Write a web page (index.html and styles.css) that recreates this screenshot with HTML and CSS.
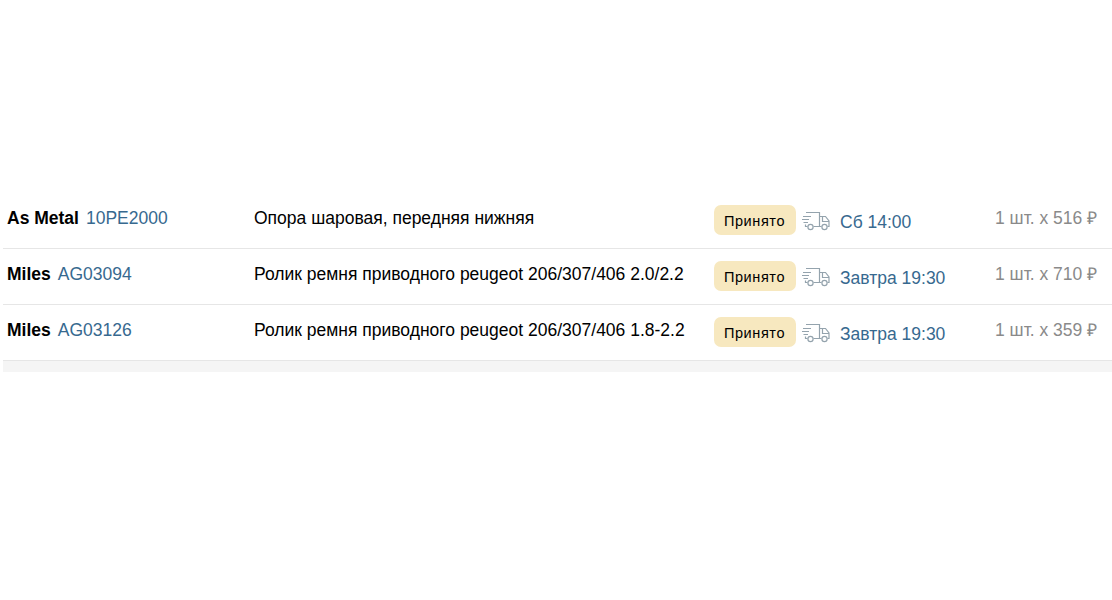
FILE: index.html
```html
<!DOCTYPE html>
<html lang="ru">
<head>
<meta charset="utf-8">
<title>Заказы</title>
<link rel="stylesheet" href="styles.css">
</head>
<body>
<svg class="defs" width="0" height="0" aria-hidden="true">
  <symbol id="truck" viewBox="0 0 28 20">
    <path d="M4 1.500H17.500V15.500H11.500M5.500 15.500H3.500V13.500M17.500 5.500H23.500L27 10V15.500H25.500M19.500 15.500H17.500M20.500 5.500V10.500H27M1 5.500H9M0 8.500H7M1.500 11.500H6" fill="none" stroke="currentColor" stroke-width="1.200"/>
    <circle cx="8.500" cy="16" r="2.600" fill="none" stroke="currentColor" stroke-width="1.200"/>
    <circle cx="22.500" cy="16" r="2.600" fill="none" stroke="currentColor" stroke-width="1.200"/>
  </symbol>
</svg>
<main class="list">
  <div class="row">
    <div class="part"><b class="brand">As Metal</b><a class="code">10PE2000</a></div>
    <div class="name">Опора шаровая, передняя нижняя</div>
    <div class="delivery">
      <span class="badge">Принято</span>
      <svg class="truck"><use href="#truck"/></svg>
      <a class="date">Сб 14:00</a>
    </div>
    <div class="qty">1 шт. х 516 ₽</div>
  </div>
  <div class="row">
    <div class="part"><b class="brand">Miles</b><a class="code">AG03094</a></div>
    <div class="name">Ролик ремня приводного peugeot 206/307/406 2.0/2.2</div>
    <div class="delivery">
      <span class="badge">Принято</span>
      <svg class="truck"><use href="#truck"/></svg>
      <a class="date">Завтра 19:30</a>
    </div>
    <div class="qty">1 шт. х 710 ₽</div>
  </div>
  <div class="row">
    <div class="part"><b class="brand">Miles</b><a class="code">AG03126</a></div>
    <div class="name">Ролик ремня приводного peugeot 206/307/406 1.8-2.2</div>
    <div class="delivery">
      <span class="badge">Принято</span>
      <svg class="truck"><use href="#truck"/></svg>
      <a class="date">Завтра 19:30</a>
    </div>
    <div class="qty">1 шт. х 359 ₽</div>
  </div>
  <div class="footer"></div>
</main>
</body>
</html>
```
FILE: styles.css
```css
html, body {
  margin: 0;
  padding: 0;
  background: #fff;
}
body {
  font-family: "Liberation Sans", Arial, sans-serif;
  font-size: 17.500px;
  color: #000;
}
.defs {
  display: block;
  height: 0;
}
.list {
  padding: 193px 0 0 3px;
}
.row {
  display: flex;
  height: 55px;
  padding-left: 4px;
  border-bottom: 1px solid #e6e6e6;
}
.part {
  width: 247px;
  padding-top: 15px;
  line-height: 20px;
}
.brand {
  font-weight: 700;
  margin-right: 7px;
}
.code {
  color: #37698f;
}
.name {
  width: 460px;
  padding-top: 15px;
  line-height: 20px;
}
.delivery {
  width: 281px;
  display: flex;
  align-items: flex-start;
  padding-top: 12px;
}
.badge {
  width: 82px;
  height: 30px;
  padding-right: 1px;
  box-sizing: border-box;
  line-height: 32px;
  text-align: center;
  background: #f7e8bf;
  border-radius: 7px;
  font-size: 14.500px;
  letter-spacing: 0.600px;
}
.truck {
  width: 28px;
  height: 20px;
  margin: 6px 10px 0 6px;
  color: #94a3ad;
}
.date {
  color: #37698f;
  line-height: 20px;
  padding-top: 7px;
}
.qty {
  padding-top: 15px;
  line-height: 20px;
  color: #8a8a8a;
}
.footer {
  height: 11px;
  background: #f5f5f5;
}
```
